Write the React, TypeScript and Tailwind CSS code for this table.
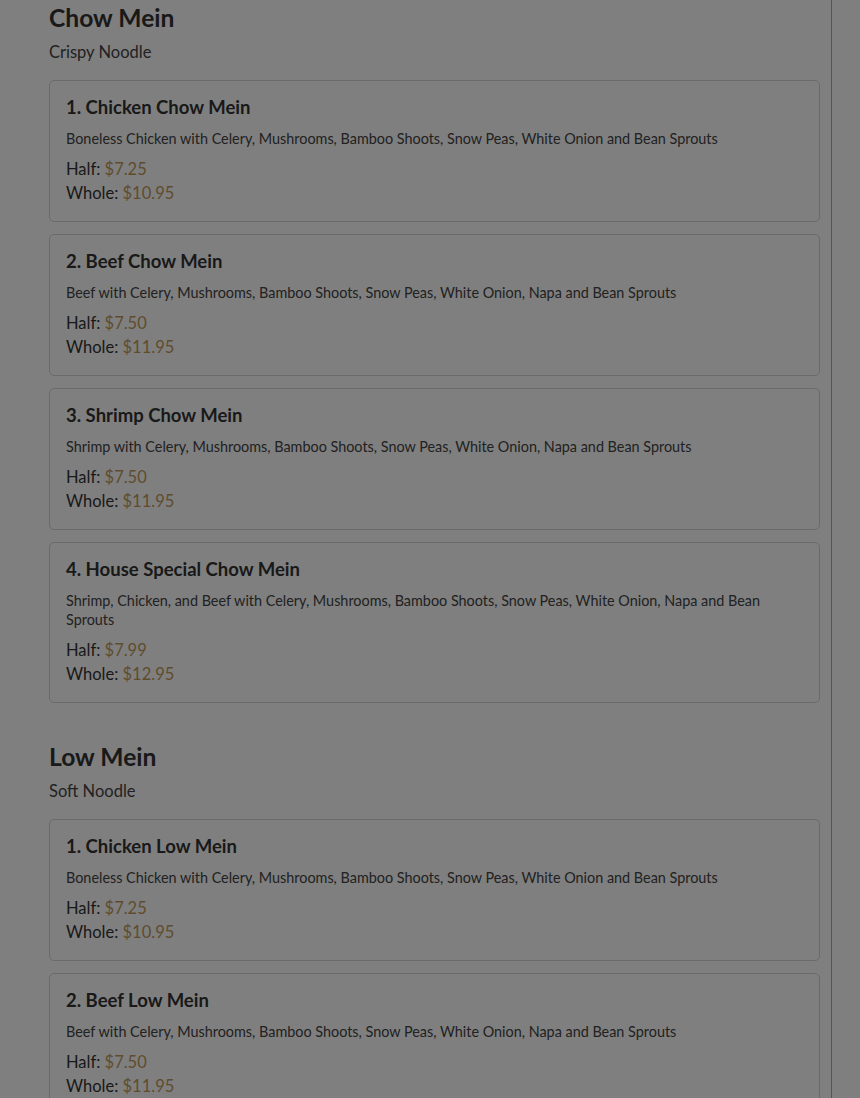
const sections = [
  {
    title: "Chow Mein",
    subtitle: "Crispy Noodle",
    items: [
      {
        name: "1. Chicken Chow Mein",
        desc: "Boneless Chicken with Celery, Mushrooms, Bamboo Shoots, Snow Peas, White Onion and Bean Sprouts",
        half: "$7.25",
        whole: "$10.95",
      },
      {
        name: "2. Beef Chow Mein",
        desc: "Beef with Celery, Mushrooms, Bamboo Shoots, Snow Peas, White Onion, Napa and Bean Sprouts",
        half: "$7.50",
        whole: "$11.95",
      },
      {
        name: "3. Shrimp Chow Mein",
        desc: "Shrimp with Celery, Mushrooms, Bamboo Shoots, Snow Peas, White Onion, Napa and Bean Sprouts",
        half: "$7.50",
        whole: "$11.95",
      },
      {
        name: "4. House Special Chow Mein",
        desc: "Shrimp, Chicken, and Beef with Celery, Mushrooms, Bamboo Shoots, Snow Peas, White Onion, Napa and Bean Sprouts",
        half: "$7.99",
        whole: "$12.95",
      },
    ],
  },
  {
    title: "Low Mein",
    subtitle: "Soft Noodle",
    items: [
      {
        name: "1. Chicken Low Mein",
        desc: "Boneless Chicken with Celery, Mushrooms, Bamboo Shoots, Snow Peas, White Onion and Bean Sprouts",
        half: "$7.25",
        whole: "$10.95",
      },
      {
        name: "2. Beef Low Mein",
        desc: "Beef with Celery, Mushrooms, Bamboo Shoots, Snow Peas, White Onion, Napa and Bean Sprouts",
        half: "$7.50",
        whole: "$11.95",
      },
    ],
  },
];

const MenuCard = ({ item }: { item: (typeof sections)[0]["items"][0] }) => {
  return (
    <div className="rounded-[5px] border border-[#d4d4d4] bg-white px-4 pt-[15px] pb-4">
      <h3 className="text-[18.5px] leading-[22px] font-bold text-[#333]">
        {item.name}
      </h3>
      <p className="mt-[11px] text-[14.4px] leading-[19px] text-[#444]">
        {item.desc}
      </p>
      <div className="mt-[9px] text-[16.5px] leading-[24px] text-[#333]">
        <div>
          Half: <span className="text-[#bf995c]">{item.half}</span>
        </div>
        <div>
          Whole: <span className="text-[#bf995c]">{item.whole}</span>
        </div>
      </div>
    </div>
  );
};

const App = () => {
  return (
    <div
      className="relative h-[1098px] overflow-hidden bg-white"
      style={{ fontFamily: "Lato, 'Noto Sans', sans-serif" }}
    >
      <div className="h-full w-[832px] border-r border-[#aaa] pt-[2px] pr-[11px] pl-[49px]">
        {sections.map((section) => (
          <div key={section.title} className="mb-[38px]">
            <h2 className="text-[24.6px] leading-[32px] font-bold text-[#333]">
              {section.title}
            </h2>
            <div className="mt-[6px] text-[16.5px] leading-[24px] text-[#444]">
              {section.subtitle}
            </div>
            <div className="mt-4 flex flex-col gap-[12px]">
              {section.items.map((item) => (
                <MenuCard key={item.name} item={item} />
              ))}
            </div>
          </div>
        ))}
      </div>
      {/* modal backdrop */}
      <div className="fixed inset-0 bg-black/50" />
    </div>
  );
};

export default App;
